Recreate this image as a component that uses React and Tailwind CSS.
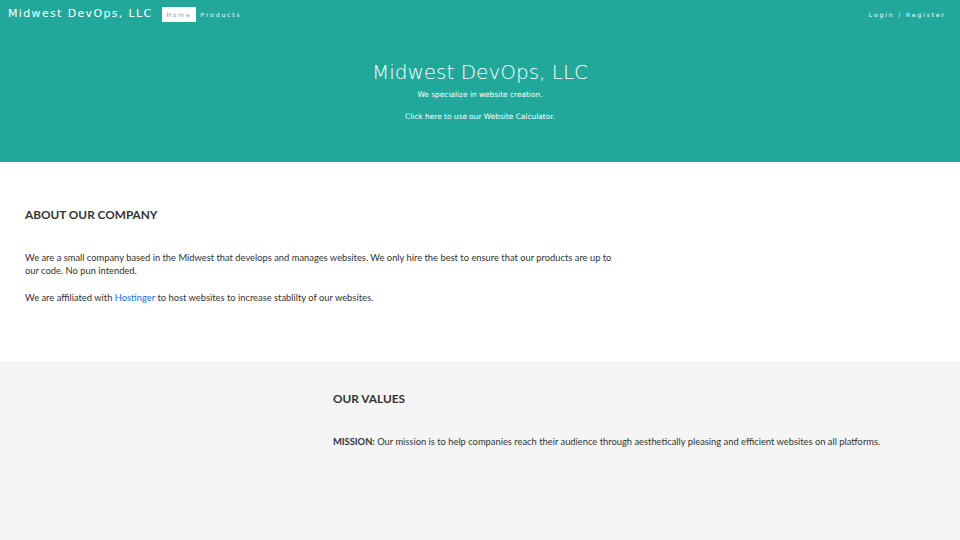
export default function App() {
  return (
    <div className="min-h-[540px] bg-[#f5f5f5]">
      <header className="bg-[#21a89a] h-[162px] flex flex-col text-white" style={{ fontFamily: '"DejaVu Sans", sans-serif' }}>
        <nav className="h-[28px] flex items-center pl-[8px] pr-[14px]">
          <span className="text-[11px] tracking-[1.35px]">Midwest DevOps, LLC</span>
          <a className="ml-[9px] bg-white text-[#9a9a9a] text-[6px] tracking-[1.8px] h-[15px] pl-[5px] pr-[5px] flex items-center">Home</a>
          <a className="ml-[4px] text-[6px] tracking-[1.9px]">Products</a>
          <a className="ml-auto text-[6px] tracking-[1.9px]">Login / Register</a>
        </nav>
        <div className="flex flex-col items-center">
          <h1 className="mt-[29px] text-[20px] font-light leading-[30px]">Midwest DevOps, LLC</h1>
          <p className="mt-[3px] text-[7.4px] leading-[10px]">We specialize in website creation.</p>
          <p className="mt-[12px] text-[7.4px] leading-[10px]">Click here to use our Website Calculator.</p>
        </div>
      </header>

      <section className="bg-white h-[199px] px-[25px] text-[#333]" style={{ fontFamily: 'Lato, sans-serif' }}>
        <h2 className="pt-[45px] text-[11.8px] font-bold leading-[16px]">ABOUT OUR COMPANY</h2>
        <p className="mt-[28px] max-w-[598px] text-[9.35px] leading-[13px]">
          We are a small company based in the Midwest that develops and manages websites. We only hire the best to ensure that our products are up to our code. No pun intended.
        </p>
        <p className="mt-[14px] text-[9.35px] leading-[13px]">
          We are affiliated with <a className="text-[#2a6bd8]">Hostinger</a> to host websites to increase stablilty of our websites.
        </p>
      </section>

      <section className="pl-[333px] text-[#333]" style={{ fontFamily: 'Lato, sans-serif' }}>
        <h2 className="pt-[30px] text-[11.8px] font-bold leading-[16px]">OUR VALUES</h2>
        <p className="mt-[28px] text-[9.35px] leading-[13px]">
          <b>MISSION:</b> Our mission is to help companies reach their audience through aesthetically pleasing and efficient websites on all platforms.
        </p>
      </section>
    </div>
  );
}
